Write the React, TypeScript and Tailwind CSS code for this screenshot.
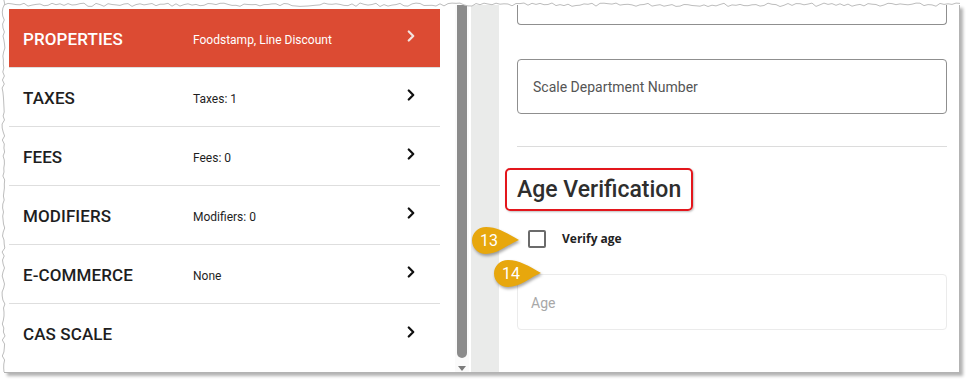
import React from 'react';
import { ChevronRight } from 'lucide-react';

interface RowProps {
  label: string;
  detail?: string;
  active?: boolean;
  last?: boolean;
}

const Row: React.FC<RowProps> = ({ label, detail, active = false, last = false }) => {
  return (
    <div
      className={`flex h-[59px] items-center pl-[14px] pr-[20px] pt-[3px] ${
        active ? 'bg-[#dc4b33] text-white' : 'text-[#1e1e1e]'
      } ${last ? '' : 'border-b border-[#dedede]'}`}
    >
      <div className="w-[170px] text-[17px] font-medium tracking-[0.1px]">{label}</div>
      <div className="flex-1 text-[12px]">{detail}</div>
      <ChevronRight
        size={18}
        strokeWidth={3}
        className={`-mt-[7px] ${active ? 'text-[#f3e3df]' : 'text-[#111]'}`}
      />
    </div>
  );
};

// pin-style callout pointing right
const Callout: React.FC<{ n: string }> = ({ n }) => (
  <div className="relative h-[29px] w-[50px]">
    <svg width="50" height="29" viewBox="0 0 50 29" className="drop-shadow-[1px_2px_1.5px_rgba(0,0,0,0.35)]">
      <path d="M15 1 C26 1 36 7 48 14 C36 19 27 28 15 28 C7 28 1 22 1 14.5 C1 7 7 1 15 1 Z" fill="#e7a70d" />
    </svg>
    <span className="absolute left-[5px] top-[4px] w-[26px] text-center text-[16px] leading-[21px] text-white">
      {n}
    </span>
  </div>
);

function tornPoints(len: number, seed: number, base: number, amp: number) {
  const pts: string[] = [];
  let s = seed;
  for (let i = 0; i <= len; i += 4) {
    s = (s * 9301 + 49297) % 233280;
    const d = (s / 233280) * amp;
    pts.push(`${i},${(base + d).toFixed(1)}`);
  }
  return pts;
}

export default function App() {
  const top = tornPoints(960, 7, 3, 3.5);
  const left = tornPoints(373, 11, 2, 3).map((p) => p.split(',').reverse().join(','));

  const rows = [
    { label: 'PROPERTIES', detail: 'Foodstamp, Line Discount', active: true },
    { label: 'TAXES', detail: 'Taxes: 1' },
    { label: 'FEES', detail: 'Fees: 0' },
    { label: 'MODIFIERS', detail: 'Modifiers: 0' },
    { label: 'E-COMMERCE', detail: 'None' },
    { label: 'CAS SCALE', detail: '', last: true },
  ];

  return (
    <div className="relative h-[385px] w-[971px] overflow-hidden bg-white pl-[4px] pt-[5px] font-['Roboto',sans-serif]">
      <div className="relative flex h-[368px] w-[956px] overflow-hidden border-b border-r border-[#b3b3b3] bg-white shadow-[3px_3px_3px_rgba(0,0,0,0.3)]">
        {/* list */}
        <div className="ml-[5px] mt-[4px] w-[431px]">
          {rows.map((r) => (
            <Row key={r.label} {...r} />
          ))}
        </div>

        {/* scrollbar */}
        <div className="ml-[15px] flex w-[14px] flex-col items-center bg-[#fafafa]">
          <div className="h-[353px] w-[10px] rounded-b-[5px] bg-[#8b8b8b]" />
          <div className="mt-[8px] h-0 w-0 border-l-[4px] border-r-[4px] border-t-[5px] border-l-transparent border-r-transparent border-t-[#7a7a7a]" />
        </div>

        <div className="ml-[2px] w-[28px] bg-[#eaebea]" />

        {/* form */}
        <div className="flex-1 pl-[18px] pr-[12px]">
          <div className="h-[20px] rounded-b-[4px] border border-t-0 border-[#8f8f8f]" />
          <div className="mt-[34px] flex h-[55px] items-center rounded-[4px] border border-[#8f8f8f] pl-[15px] pt-[1px] text-[14px] text-[#555]">
            Scale Department Number
          </div>
          <div className="mt-[32px] h-px bg-[#dcdcdc]" />

          <div className="-ml-[12px] mt-[21px] inline-block rounded-[5px] border-2 border-[#e3161c] px-[10px] shadow-[1px_1px_2px_rgba(0,0,0,0.25)]">
            <h2 className="text-[23px] font-medium leading-[39px] text-[#2e2e2e]">Age Verification</h2>
          </div>

          <label className="mt-[19px] flex h-[18px] items-center">
            <span className="ml-[11px] h-[18px] w-[18px] rounded-[2px] border-2 border-[#6b6b6b]" />
            <span className="ml-[16px] font-['Open_Sans',sans-serif] text-[12px] font-bold text-[#222]">Verify age</span>
          </label>

          <div className="mt-[26px] flex h-[56px] items-center rounded-[4px] border border-[#ebebeb] pl-[13px] pt-[2px] text-[14px] text-[#a8a8a8]">
            Age
          </div>
        </div>

        {/* annotation callouts */}
        <div className="absolute left-[467px] top-[221px]">
          <Callout n="13" />
        </div>
        <div className="absolute left-[489px] top-[254px]">
          <Callout n="14" />
        </div>
      </div>

      {/* torn edges */}
      <svg className="absolute left-0 top-0" width="971" height="385">
        <polygon points={`0,0 971,0 971,2 ${top.slice().reverse().join(' ')}`} fill="white" />
        <polyline points={top.join(' ')} fill="none" stroke="#bdbdbd" strokeWidth="1" />
        <polygon points={`0,0 ${left.join(' ')} 0,380`} fill="white" />
        <polyline points={left.join(' ')} fill="none" stroke="#bdbdbd" strokeWidth="1" />
      </svg>
    </div>
  );
}
